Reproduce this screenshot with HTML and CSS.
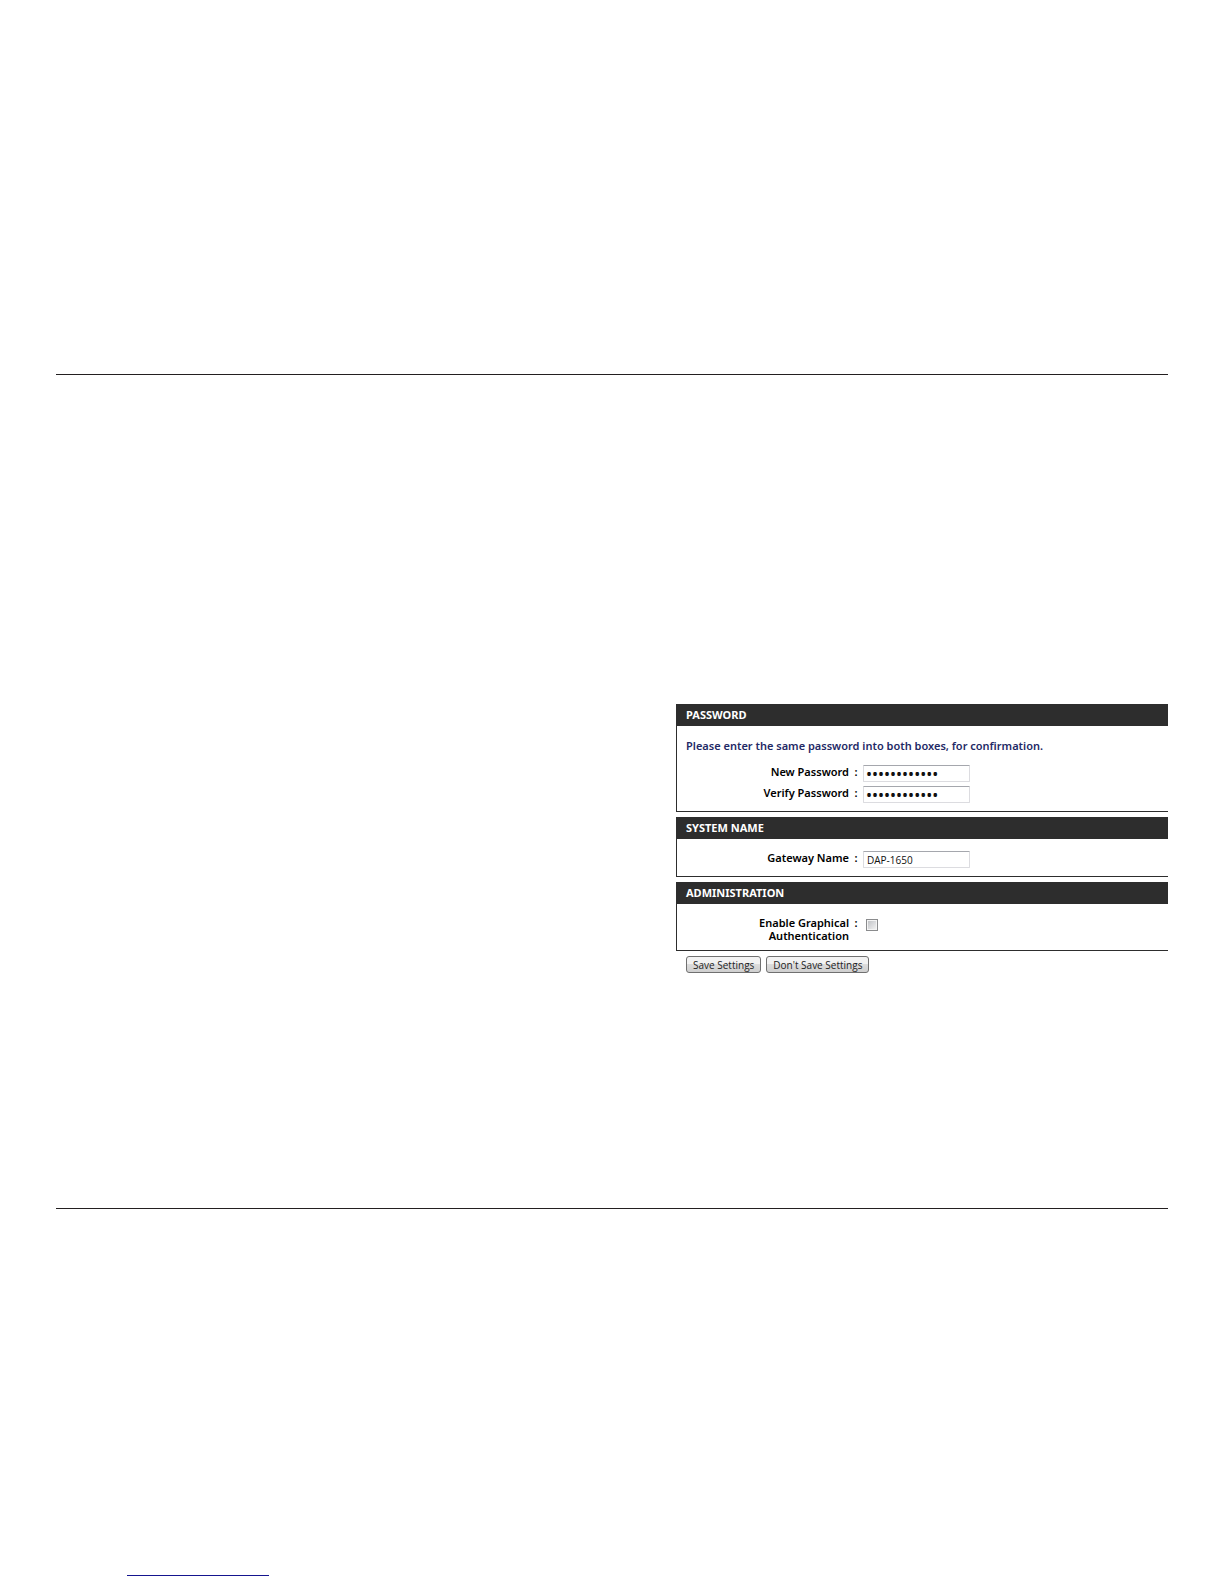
FILE: index.html
```html
<!DOCTYPE html>
<html lang="en">
<head>
<meta charset="utf-8">
<meta name="viewport" content="width=device-width, initial-scale=1">
<link rel="stylesheet" href="styles.css">
</head>
<body>
<main class="sheet">
  <form class="settings">
    <section class="panel">
      <h2 class="panel-title">PASSWORD</h2>
      <div class="panel-body">
        <p class="message">Please enter the same password into both boxes, for confirmation.</p>
        <div class="row">
          <label class="label" for="new-password">New Password</label><span class="colon">:</span>
          <input class="field field-secret" id="new-password" type="password" value="abcdefghijkl" autocomplete="off">
        </div>
        <div class="row">
          <label class="label" for="verify-password">Verify Password</label><span class="colon">:</span>
          <input class="field field-secret" id="verify-password" type="password" value="abcdefghijkl" autocomplete="off">
        </div>
      </div>
    </section>
    <section class="panel">
      <h2 class="panel-title">SYSTEM NAME</h2>
      <div class="panel-body">
        <div class="row">
          <label class="label" for="gateway-name">Gateway Name</label><span class="colon">:</span>
          <input class="field" id="gateway-name" type="text" value="DAP-1650">
        </div>
      </div>
    </section>
    <section class="panel">
      <h2 class="panel-title">ADMINISTRATION</h2>
      <div class="panel-body">
        <div class="row">
          <label class="label" for="graphical-auth">Enable Graphical<br>Authentication</label><span class="colon">:</span>
          <input class="check" id="graphical-auth" type="checkbox">
        </div>
      </div>
    </section>
    <div class="actions">
      <button class="button" type="button">Save Settings</button>
      <button class="button" type="button">Don't Save Settings</button>
    </div>
  </form>
</main>
<footer class="footer"><hr class="link-rule"></footer>
</body>
</html>
```
FILE: styles.css
```css
* {
  box-sizing: border-box;
}

body {
  margin: 0;
  background: #fff;
  color: #000;
  font-family: "Noto Sans", "Open Sans", sans-serif;
  font-size: 11px;
}

.sheet {
  display: grid;
  grid-template-columns: 620fr 492fr;
  margin: 374px 56px 0;
  padding: 329px 0 235px;
  border-top: 1px solid #231f20;
  border-bottom: 1px solid #231f20;
}

.settings {
  grid-column: 2;
  display: flex;
  flex-direction: column;
  gap: 5px;
}

.panel {
  border-left: 1px solid #2d2d2d;
  border-bottom: 1px solid #2d2d2d;
}

.panel-title {
  margin: 0;
  padding-left: 9px;
  background: #2d2d2d;
  color: #fff;
  font-size: 11px;
  font-weight: 700;
  line-height: 22px;
}

.panel-body {
  display: flex;
  flex-direction: column;
  gap: 4px;
  padding: 12px 0 8px 9px;
}

.message {
  margin: 0 0 7px;
  color: #1f2a66;
  font-weight: 600;
  line-height: 16px;
  white-space: nowrap;
}

.row {
  display: grid;
  grid-template-columns: 163px 14px 1fr;
  align-items: start;
  font-weight: 600;
  line-height: 13px;
}

.label {
  text-align: right;
}

.colon {
  text-align: center;
}

.field {
  width: 107px;
  height: 17px;
  margin: 0;
  padding: 1px 3px 0;
  border: 1px solid #dcdce0;
  border-top-color: #a5a7ad;
  border-radius: 1px;
  background: #fff;
  color: #111;
  font-family: "Open Sans", sans-serif;
  font-size: 10px;
}

.field-secret {
  padding-left: 2px;
  font-family: "Noto Sans", sans-serif;
  font-size: 16px;
}

.check {
  appearance: none;
  width: 12px;
  height: 12px;
  margin: 3px;
  border: 1px solid #8a8b8d;
  background: linear-gradient(135deg, #bcbec2, #f6f6f6);
  box-shadow: inset 0 0 0 1px #f4f4f4;
}

.actions {
  display: flex;
  gap: 5px;
  padding-left: 10px;
}

.button {
  height: 17px;
  padding: 0 6px;
  border: 1px solid #707070;
  border-radius: 3px;
  background: linear-gradient(#f2f2f2 50%, #dcdcdc 50%, #cfcfcf);
  color: #222;
  font-family: "Open Sans", sans-serif;
  font-size: 10px;
  line-height: 14px;
  white-space: nowrap;
}

.footer {
  padding: 366px 127px 8px;
}

.link-rule {
  width: 142px;
  margin: 0;
  border: 0;
  border-top: 1px solid #15158f;
}
```
